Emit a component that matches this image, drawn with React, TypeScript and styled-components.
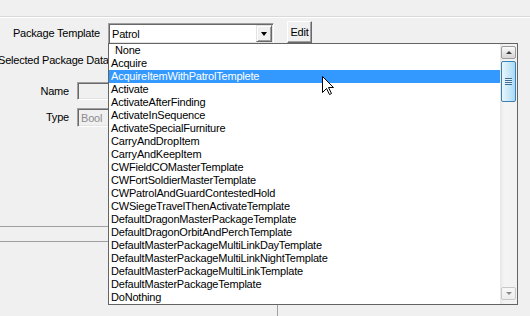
import styled, { createGlobalStyle } from 'styled-components';

const GlobalStyle = createGlobalStyle`
  html, body {
    margin: 0;
    padding: 0;
    background: #f0f0f0;
  }
  body {
    font-family: 'Liberation Sans', Arial, sans-serif;
    font-size: 11px;
    letter-spacing: -0.2px;
    color: #000;
  }
`;

const Window = styled.div`
  position: relative;
  width: 530px;
  height: 316px;
  overflow: hidden;
  background: #f0f0f0;
  display: flex;
  flex-direction: column;
`;

const TopStrip = styled.div`
  flex: none;
  height: 16px;
  border-bottom: 1px solid #d9d9d9;
  box-shadow: 0 1px 0 #ffffff;
`;

const TemplateRow = styled.div`
  position: relative;
  z-index: 3;
  display: flex;
  align-items: flex-start;
  height: 23px;
  margin-top: 4px;
`;

const FieldLabel = styled.label<{ $width: number; $height: number }>`
  flex: none;
  width: ${(p) => p.$width}px;
  margin-right: 8px;
  text-align: right;
  line-height: ${(p) => p.$height}px;
  white-space: nowrap;
`;

const Sunken = styled.div<{ $width: number; $height: number; $disabled?: boolean }>`
  position: relative;
  flex: none;
  box-sizing: border-box;
  display: flex;
  align-items: center;
  width: ${(p) => p.$width}px;
  height: ${(p) => p.$height}px;
  padding-left: 2px;
  border: 1px solid;
  border-color: #a0a0a0 #ffffff #ffffff #a0a0a0;
  box-shadow: inset 1px 1px 0 #696969, inset -1px -1px 0 #e3e3e3;
  background: ${(p) => (p.$disabled ? '#f0f0f0' : '#ffffff')};
  color: ${(p) => (p.$disabled ? '#8d8d8d' : '#000')};
`;

const ComboText = styled.span`
  flex: 1;
  padding-left: 1px;
  white-space: nowrap;
`;

const DropButton = styled.div`
  box-sizing: border-box;
  display: flex;
  align-items: center;
  justify-content: center;
  width: 16px;
  height: 17px;
  margin-right: 1px;
  background: #f0f0f0;
  border: 1px solid;
  border-color: #e3e3e3 #696969 #696969 #e3e3e3;
  box-shadow: inset 1px 1px 0 #ffffff, inset -1px -1px 0 #a0a0a0;

  &::after {
    content: '';
    border-left: 3.5px solid transparent;
    border-right: 3.5px solid transparent;
    border-top: 4px solid #000;
    margin-top: 1px;
  }
`;

const PushButton = styled.button`
  box-sizing: border-box;
  width: 25px;
  height: 22px;
  margin-left: 13px;
  padding: 0;
  font: inherit;
  letter-spacing: inherit;
  color: #000;
  background: #f0f0f0;
  border: 1px solid;
  border-color: #ffffff #696969 #696969 #ffffff;
  box-shadow: inset -1px -1px 0 #a0a0a0;
`;

const DropList = styled.div`
  position: absolute;
  top: 100%;
  left: -1px;
  z-index: 5;
  box-sizing: border-box;
  display: flex;
  width: 410px;
  height: 262px;
  border: 1px solid #646464;
  background: #ffffff;
`;

const Items = styled.div`
  flex: 1;
  display: flex;
  flex-direction: column;
  overflow: hidden;
`;

const Item = styled.div<{ $selected?: boolean; $focused?: boolean }>`
  flex: none;
  height: 13px;
  line-height: 13px;
  padding-left: ${(p) => (p.$focused ? 6 : 2)}px;
  white-space: nowrap;
  background: ${(p) => (p.$selected ? '#3399ff' : 'transparent')};
  color: ${(p) => (p.$selected ? '#ffffff' : '#000')};
`;

const ScrollBar = styled.div`
  flex: none;
  box-sizing: border-box;
  display: flex;
  flex-direction: column;
  width: 17px;
  border-left: 1px solid #e8e8e8;
  background: linear-gradient(to right, #e9e9e9, #f4f4f4 3px, #f2f2f2);
`;

const ScrollButton = styled.div<{ $down?: boolean }>`
  flex: none;
  box-sizing: border-box;
  display: flex;
  align-items: center;
  justify-content: center;
  height: 13px;
  margin: ${(p) => (p.$down ? 'auto 1px 4px 0' : '2px 1px 2px 0')};
  border: 1px solid ${(p) => (p.$down ? '#c8c8c8' : '#9b9b9b')};
  border-radius: 2px;
  background: ${(p) =>
    p.$down
      ? 'linear-gradient(#f7f7f7, #ececec)'
      : 'linear-gradient(#fbfbfb, #e6e6e6 50%, #d6d6d6)'};

  &::after {
    content: '';
    border-left: 3px solid transparent;
    border-right: 3px solid transparent;
    ${(p) =>
      p.$down
        ? 'border-top: 3px solid #8a8a8a;'
        : 'border-bottom: 3px solid #3c3c3c;'}
  }
`;

const Thumb = styled.div`
  flex: none;
  box-sizing: border-box;
  display: flex;
  align-items: center;
  justify-content: center;
  height: 41px;
  margin-right: 1px;
  border: 1px solid #3c7fb1;
  border-radius: 2px;
  background: linear-gradient(to right, #e9f6fd, #c9e9fa 50%, #a7d9f5);

  &::after {
    content: '';
    width: 7px;
    height: 7px;
    background: repeating-linear-gradient(
      to bottom,
      #3f6d93 0,
      #3f6d93 1px,
      #dff1fb 1px,
      #dff1fb 2px
    );
  }
`;

const Group = styled.div`
  display: flex;
  flex-direction: column;
  margin-top: 10px;
`;

const GroupTitle = styled.div`
  margin-left: -2px;
  line-height: 13px;
  white-space: nowrap;
`;

const FormRow = styled.div<{ $top: number }>`
  display: flex;
  align-items: center;
  margin-top: ${(p) => p.$top}px;
`;

const Rule = styled.div<{ $top: number }>`
  flex: none;
  width: 278px;
  height: 1px;
  margin-top: ${(p) => p.$top}px;
  background: #a0a0a0;
`;

const BottomPane = styled.div`
  flex: 1;
  display: flex;
`;

const SidePane = styled.div`
  width: 277px;
  border-right: 1px solid #a0a0a0;
`;

const Cursor = styled.svg`
  position: absolute;
  left: 322px;
  top: 76px;
  z-index: 10;
`;

const templates = [
  'None',
  'Acquire',
  'AcquireItemWithPatrolTemplete',
  'Activate',
  'ActivateAfterFinding',
  'ActivateInSequence',
  'ActivateSpecialFurniture',
  'CarryAndDropItem',
  'CarryAndKeepItem',
  'CWFieldCOMasterTemplate',
  'CWFortSoldierMasterTemplate',
  'CWPatrolAndGuardContestedHold',
  'CWSiegeTravelThenActivateTemplate',
  'DefaultDragonMasterPackageTemplate',
  'DefaultDragonOrbitAndPerchTemplate',
  'DefaultMasterPackageMultiLinkDayTemplate',
  'DefaultMasterPackageMultiLinkNightTemplate',
  'DefaultMasterPackageMultiLinkTemplate',
  'DefaultMasterPackageTemplate',
  'DoNothing',
];

export default function App() {
  const selected = 'AcquireItemWithPatrolTemplete';

  return (
    <Window>
      <GlobalStyle />
      <TopStrip />

      <TemplateRow>
        <FieldLabel $width={100} $height={21} style={{ marginTop: 2 }}>
          Package Template
        </FieldLabel>
        <Sunken $width={166} $height={21} style={{ marginTop: 2 }}>
          <ComboText>Patrol</ComboText>
          <DropButton />
          <DropList>
            <Items>
              {templates.map((t, i) => (
                <Item key={t} $selected={t === selected} $focused={i === 0}>
                  {t}
                </Item>
              ))}
            </Items>
            <ScrollBar>
              <ScrollButton />
              <Thumb />
              <ScrollButton $down />
            </ScrollBar>
          </DropList>
        </Sunken>
        <PushButton>Edit</PushButton>
      </TemplateRow>

      <Group>
        <GroupTitle>Selected Package Data</GroupTitle>
        <FormRow $top={15}>
          <FieldLabel $width={69} $height={18}>Name</FieldLabel>
          <Sunken $width={200} $height={18} $disabled />
        </FormRow>
        <FormRow $top={8}>
          <FieldLabel $width={69} $height={19}>Type</FieldLabel>
          <Sunken $width={200} $height={19} $disabled>
            <ComboText>Bool</ComboText>
          </Sunken>
        </FormRow>
      </Group>

      <Rule $top={99} />
      <Rule $top={14} />
      <BottomPane>
        <SidePane />
      </BottomPane>

      <Cursor width="13" height="20" viewBox="0 0 13 20">
        <polygon
          points="0.5,0.5 0.5,16.5 4.5,12.5 7.5,18.5 9.5,17.5 6.5,11.5 11.5,11.5"
          fill="#ffffff"
          stroke="#000000"
          strokeWidth="1"
          strokeLinejoin="miter"
        />
      </Cursor>
    </Window>
  );
}
